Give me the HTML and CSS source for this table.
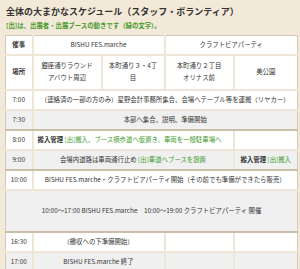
FILE: index.html
```html
<!DOCTYPE html>
<html lang="ja">
<head>
<meta charset="utf-8">
<title>全体の大まかなスケジュール</title>
<link rel="stylesheet" href="styles.css">
</head>
<body>
<div class="page">
  <h1 class="title">全体の大まかなスケジュール（スタッフ・ボランティア）</h1>
  <p class="note">[出]は、出展者・出展ブースの動きです（緑の文字）。</p>
  <table class="schedule">
    <colgroup>
      <col class="c-time"><col class="c-a"><col class="c-b"><col class="c-c"><col class="c-d">
    </colgroup>
    <tbody>
      <tr class="row-white">
        <td class="head">催事</td>
        <td colspan="2">BISHU FES.marche</td>
        <td colspan="2">クラフトビアパーティ</td>
      </tr>
      <tr class="row-white row-place">
        <td class="head">場所</td>
        <td>銀座通りラウンド<br>アバウト周辺</td>
        <td>本町通り３・4丁<br>目</td>
        <td>本町通り２丁目<br>オリナス前</td>
        <td>美公園</td>
      </tr>
      <tr class="row-white">
        <td>7:00</td>
        <td colspan="4">（連絡済の一部の方のみ）星野会計事務所集合、会場へテーブル等を運搬（リヤカー）</td>
      </tr>
      <tr class="row-gray row-dark">
        <td>7:30</td>
        <td colspan="4">本部へ集合、説明、準備開始</td>
      </tr>
      <tr class="row-white">
        <td>8:00</td>
        <td colspan="3" class="left"><b>搬入管理</b> <span class="green">[出]搬入、ブース横歩道へ仮置き、車両を一般駐車場へ</span></td>
        <td></td>
      </tr>
      <tr class="row-gray row-dark">
        <td>9:00</td>
        <td colspan="3">会場内道路は車両通行止め <span class="green">[出]車道へブースを設置</span></td>
        <td><b>搬入管理</b> <span class="green">[出]搬入</span></td>
      </tr>
      <tr class="row-white">
        <td>10:00</td>
        <td colspan="4">BISHU FES.marche・クラフトビアパーティ開始（その前でも準備ができたら販売）</td>
      </tr>
      <tr class="row-gray row-dark row-big">
        <td colspan="5">10:00～17:00 BISHU FES.marche　10:00～19:00 クラフトビアパーティ 開催</td>
      </tr>
      <tr class="row-white">
        <td>16:30</td>
        <td colspan="2">（撤収への下準備開始）</td>
        <td></td>
        <td></td>
      </tr>
      <tr class="row-gray">
        <td>17:00</td>
        <td colspan="2">BISHU FES.marche 終了</td>
        <td></td>
        <td></td>
      </tr>
    </tbody>
  </table>
</div>
</body>
</html>
```

FILE: styles.css
```css
html, body {
  margin: 0;
  padding: 0;
  background: #f3e9d8;
}

body {
  font-family: "Noto Sans CJK JP", "Noto Sans", sans-serif;
  color: #333333;
  height: 269px;
  overflow: hidden;
}

.page {
  padding: 5px 3px 0 5px;
}

.title {
  margin: 0;
  padding-left: 1px;
  font-size: 9px;
  line-height: 14px;
  font-weight: 700;
  color: #333333;
  white-space: nowrap;
}

.note {
  margin: 2px 0 0;
  padding-left: 1px;
  font-size: 6.4px;
  line-height: 10px;
  font-weight: 700;
  color: #4a9a2e;
  white-space: nowrap;
}

.schedule {
  margin-top: 4px;
  width: 292px;
  table-layout: fixed;
  border-collapse: collapse;
  border: 1px solid #d6cbb7;
  font-size: 6.4px;
  line-height: 12px;
}

.c-time { width: 27px; }
.c-a { width: 69px; }
.c-b { width: 63px; }
.c-c { width: 69px; }
.c-d { width: 64px; }

.schedule td {
  padding: 3px 2px;
  text-align: center;
  vertical-align: middle;
  border: 2px solid #efe6d7;
  white-space: nowrap;
  overflow: hidden;
}

.schedule tr > td:first-child { border-left: none; }
.schedule tr > td:last-child { border-right: none; }
.schedule tr:first-child > td { border-top: none; }
.schedule tr:last-child > td { border-bottom: none; }

.row-white td { background: #ffffff; }
.row-gray td { background: #f0f0f0; }
.row-dark td { border-bottom-color: #cbbfa9; }

.row-place td { padding-top: 4px; padding-bottom: 5px; }
.row-big td { padding-top: 14px; padding-bottom: 14px; }

.schedule td.head { font-weight: 700; }
.schedule td.left { text-align: left; padding-left: 4px; }

.schedule b { font-weight: 700; }
.green { color: #3f9a2c; }
```
